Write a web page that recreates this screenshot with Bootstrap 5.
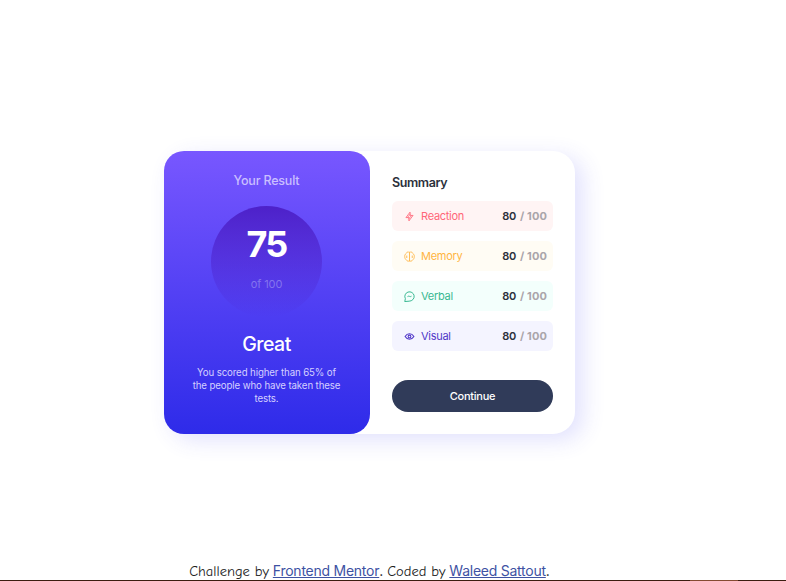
<!DOCTYPE html>
<html lang="en">
<head>
<meta charset="utf-8">
<meta name="viewport" content="width=device-width, initial-scale=1">
<title>Results summary</title>
<link href="https://cdn.jsdelivr.net/npm/bootstrap@5.3.0/dist/css/bootstrap.min.css" rel="stylesheet">
<style>
body{font-family:Inter,"Liberation Sans",sans-serif;height:581px;overflow:hidden;background:#fff}
main{width:739px;padding-top:151px}
.panel{width:411px;height:283px;border-radius:22px;box-shadow:8px 6px 22px rgba(70,70,240,.16)}
.result{width:206px;border-radius:20px;background:linear-gradient(#7857ff,#2e2be9);padding:20px 1px 0 0}
.result-title{font-size:12.5px;line-height:20px;color:#cabfff;letter-spacing:-.2px}
.score{width:111px;height:111px;margin-top:15px;background:linear-gradient(#4d21c9,rgba(37,33,201,0));padding-top:18px}
.score-num{font-size:36px;line-height:40px;letter-spacing:-1.8px}
.score-of{font-size:11px;line-height:16px;margin-top:12px;color:#8374ee;letter-spacing:-.1px}
.grade{font-size:19.5px;line-height:24px;margin-top:15px;letter-spacing:-.5px}
.note{font-size:9.7px;line-height:13px;margin-top:10px;color:#d5d0ff;letter-spacing:-.12px}
.summary{width:205px;padding:22px}
.summary-title{font-size:12.5px;line-height:20px;color:#2b303b;margin-bottom:8px;letter-spacing:-.4px}
.stat{height:30px;border-radius:6px;padding:0 6px 0 12px;font-size:11px;margin-bottom:10px}
.stat svg{width:11px;height:11px;margin-right:6px;fill:none;stroke:currentColor}
.stat-name{letter-spacing:-.28px}
.stat-val{color:#2b303b;font-size:11px;letter-spacing:-.25px}
.stat-max{color:#aaa5aa;margin-left:4px;letter-spacing:.12px;font-weight:700}
.reaction{background:#fff4f4;color:#ff6678}
.memory{background:#fffcf4;color:#ffb542}
.verbal{background:#f3fffc;color:#39b892}
.visual{background:#f4f4ff;color:#5038c8}
.go{height:32px;background:#303b59;font-size:11px;line-height:18px;margin-top:19px;letter-spacing:-.25px}
.go:hover{background:#4430df}
.credit{width:739px;height:20px;margin-top:127px;font-size:14px;line-height:20px;color:#222}
.credit a{color:#3e52a3;letter-spacing:-.25px}
.hand{font-family:"Comic Neue","Comic Sans MS",Lato,sans-serif;font-size:14.5px}
.edge{height:1px;margin-top:-1px;background:#3b1d10}
.edge span{width:48px;margin-left:690px;background:#854b32}
</style>
</head>
<body>
<main class="d-flex justify-content-center">
<section class="panel d-flex bg-white">
<div class="result d-flex flex-column align-items-center text-center text-white flex-shrink-0">
<div class="result-title fw-medium">Your Result</div>
<div class="score rounded-circle"><div class="score-num fw-bold">75</div><div class="score-of">of 100</div></div>
<div class="grade fw-medium">Great</div>
<div class="note">You scored higher than 65% of<br>the people who have taken these<br>tests.</div>
</div>
<div class="summary d-flex flex-column">
<div class="summary-title fw-semibold">Summary</div>
<div class="stat reaction d-flex align-items-center"><svg viewBox="0 0 20 20" stroke-width="1.5" stroke-linejoin="round"><path d="M11 8V2L3.5 12H9v6l7.5-10zM6 12l6-7M8 15l6-7"/></svg><span class="stat-name">Reaction</span><span class="stat-val ms-auto fw-semibold">80<span class="stat-max">/ 100</span></span></div>
<div class="stat memory d-flex align-items-center"><svg viewBox="0 0 20 20" stroke-width="1.6" stroke-linecap="round"><path d="M10 2v16M8 1.8C5.500 1.500 4.500 3 4 4.500 2 6 1 8 1.300 10c0 3 1 4.500 2.700 6 1.500 2.500 4 3 6 2 2 1 4.500.5 6-2 1.700-1.500 2.700-3 2.700-6 .3-2-.7-4-2.700-5.500-.5-1.500-1.500-3-4-2.700M5 9v3M15 9v3"/></svg><span class="stat-name">Memory</span><span class="stat-val ms-auto fw-semibold">80<span class="stat-max">/ 100</span></span></div>
<div class="stat verbal d-flex align-items-center"><svg viewBox="0 0 20 20" stroke="#00bd91" stroke-width="1.8" stroke-linejoin="round" stroke-linecap="round"><path d="M1.500 18.500l1-4.500A8.500 8.500 0 1 1 10 18.500zM7 9.800q1.500-1 3 0t3 0"/></svg><span class="stat-name">Verbal</span><span class="stat-val ms-auto fw-semibold">80<span class="stat-max">/ 100</span></span></div>
<div class="stat visual d-flex align-items-center"><svg viewBox="0 0 20 20" stroke-width="1.9"><path d="M2 10q3-5 8-5t8 5q-3 5-8 5t-8-5z"/><circle cx="10" cy="10" r="2.500"/></svg><span class="stat-name">Visual</span><span class="stat-val ms-auto fw-semibold">80<span class="stat-max">/ 100</span></span></div>
<button class="go btn rounded-pill w-100 border-0 text-white fw-medium">Continue</button>
</div>
</section>
</main>
<footer class="credit text-center text-nowrap"><span class="hand">Challenge by</span> <a href="#">Frontend Mentor</a>. <span class="hand">Coded by</span> <a href="#">Waleed Sattout</a>.</footer>
<div class="edge d-flex position-relative"><span></span></div>
</body>
</html>
